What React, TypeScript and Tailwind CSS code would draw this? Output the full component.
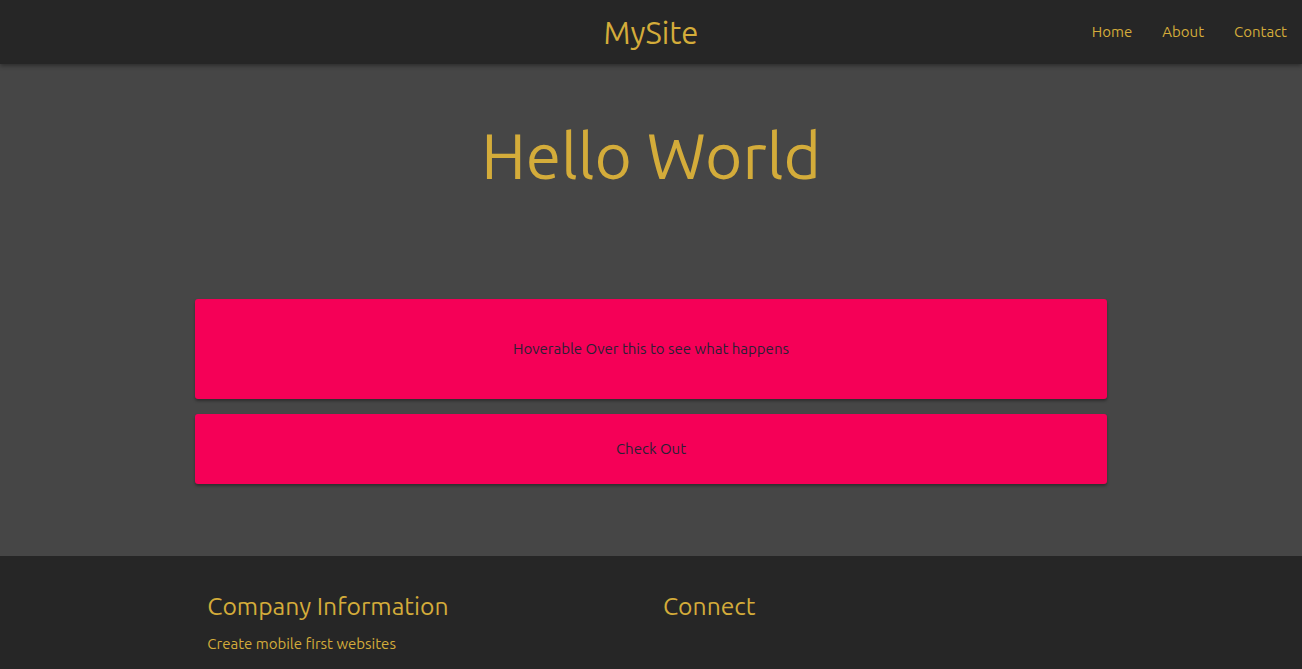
export default function App() {
  const font = { fontFamily: 'Ubuntu, Lato, "Open Sans", sans-serif' };
  return (
    <div className="min-h-screen bg-[#464646]" style={font}>
      {/* header */}
      <header className="relative z-10 flex h-16 items-center justify-center bg-[#262626] shadow-[0_2px_4px_rgba(0,0,0,0.35)]">
        <h1 className="text-[31px] leading-none text-[#d4ac3a]">MySite</h1>
        <nav className="absolute right-[15px] top-0 flex h-16 items-center gap-[30px] text-[15px] text-[#d4ac3a]">
          <a>Home</a>
          <a>About</a>
          <a>Contact</a>
        </nav>
      </header>

      {/* main */}
      <main className="flex flex-col items-center pb-[72px] pt-[56px]">
        <h2 className="text-[64px] leading-[70px] text-[#d4ac3a]">Hello World</h2>
        <div className="mt-[109px] flex w-[70%] flex-col gap-[15px]">
          <div className="flex h-[100px] items-center justify-center rounded-[3px] bg-[#f50057] text-[15px] text-[#2b2035] shadow-[0_2px_3px_rgba(0,0,0,0.35)]">
            Hoverable Over this to see what happens
          </div>
          <div className="flex h-[70px] items-center justify-center rounded-[3px] bg-[#f50057] text-[15px] text-[#2b2035] shadow-[0_2px_3px_rgba(0,0,0,0.35)]">
            Check Out
          </div>
        </div>
      </main>

      {/* footer */}
      <footer className="bg-[#262626] pb-6 pt-[35px]">
        <div className="mx-auto grid w-[70%] grid-cols-2">
          <div className="px-3">
            <h3 className="text-[24.7px] leading-[30px] text-[#d4ac3a]">Company Information</h3>
            <p className="mt-[12px] text-[15px] text-[#d4ac3a]">Create mobile first websites</p>
          </div>
          <div className="px-3">
            <h3 className="text-[24.7px] leading-[30px] text-[#d4ac3a]">Connect</h3>
          </div>
        </div>
      </footer>
    </div>
  );
}
